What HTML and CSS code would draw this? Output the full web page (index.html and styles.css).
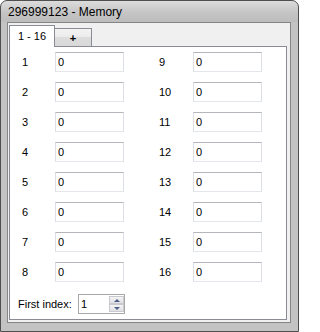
FILE: index.html
```html
<!DOCTYPE html>
<html>
<head>
<meta charset="utf-8">
<link rel="stylesheet" href="styles.css">
</head>
<body>
<div class="window">
  <div class="titlebar">296999123 - Memory</div>
  <div class="client">
    <div class="tabs">
      <div class="tabstrip">
        <div class="tab active">1 - 16</div>
        <div class="tab plus">+</div>
      </div>
      <div class="panel">
        <div class="grid">
          <div class="col col-left">
            <div class="row"><span class="label">1</span><div class="field">0</div></div>
            <div class="row"><span class="label">2</span><div class="field">0</div></div>
            <div class="row"><span class="label">3</span><div class="field">0</div></div>
            <div class="row"><span class="label">4</span><div class="field">0</div></div>
            <div class="row"><span class="label">5</span><div class="field">0</div></div>
            <div class="row"><span class="label">6</span><div class="field">0</div></div>
            <div class="row"><span class="label">7</span><div class="field">0</div></div>
            <div class="row"><span class="label">8</span><div class="field">0</div></div>
          </div>
          <div class="col col-right">
            <div class="row"><span class="label">9</span><div class="field">0</div></div>
            <div class="row"><span class="label">10</span><div class="field">0</div></div>
            <div class="row"><span class="label">11</span><div class="field">0</div></div>
            <div class="row"><span class="label">12</span><div class="field">0</div></div>
            <div class="row"><span class="label">13</span><div class="field">0</div></div>
            <div class="row"><span class="label">14</span><div class="field">0</div></div>
            <div class="row"><span class="label">15</span><div class="field">0</div></div>
            <div class="row"><span class="label">16</span><div class="field">0</div></div>
          </div>
        </div>
        <div class="first">
          <span class="first-label">First index:</span>
          <div class="spin">
            <span class="spin-val">1</span>
            <div class="spin-btns">
              <div class="spin-btn"><span class="arrow-up"></span></div>
              <div class="spin-btn"><span class="arrow-down"></span></div>
            </div>
          </div>
        </div>
      </div>
    </div>
  </div>
</div>
</body>
</html>
```

FILE: styles.css
```css
body {
  margin: 0;
  background: #fff;
}

.window {
  width: 299px;
  height: 332px;
  box-sizing: border-box;
  border: 1px solid #4f4f4f;
  border-radius: 7px 7px 0 0;
  background: linear-gradient(#dcdcdc 0px, #c4c4c4 12px, #bdbdbd 21px, #c3c3c3 21px);
  padding: 0 7px 8px 6px;
  display: flex;
  flex-direction: column;
  font-family: "Liberation Sans", Arial, sans-serif;
  color: #000;
}

.titlebar {
  height: 21px;
  font-size: 12px;
  line-height: 22px;
  padding-left: 1px;
}

.client {
  flex: 1;
  border: 1px solid #858585;
  background: #f0f0f0;
  padding: 2px 3px 2px 1px;
  display: flex;
  flex-direction: column;
}

.tabs {
  flex: 1;
  display: flex;
  flex-direction: column;
}

.tabstrip {
  display: flex;
  align-items: flex-end;
  height: 21px;
}

.tab {
  box-sizing: border-box;
  border: 1px solid #898c95;
  border-bottom: 0;
  font-size: 11px;
  text-align: center;
}

.tab.active {
  width: 46px;
  height: 22px;
  margin-bottom: -1px;
  background: #fff;
  line-height: 20px;
  position: relative;
  z-index: 1;
}

.tab.plus {
  width: 38px;
  height: 18px;
  margin-left: -1px;
  background: linear-gradient(#f3f3f3 0%, #ebebeb 50%, #dddddd 50%, #d9d9d9 100%);
  line-height: 19px;
  font-weight: bold;
}

.panel {
  flex: 1;
  border: 1px solid #898c95;
  background: #fff;
  padding-top: 5px;
}

.grid {
  display: flex;
}

.col {
  display: flex;
  flex-direction: column;
  gap: 10px;
}

.col-left {
  margin-left: 12px;
}

.col-right {
  margin-left: 35px;
}

.row {
  display: flex;
  align-items: center;
  height: 20px;
}

.label {
  width: 33px;
  font-size: 11px;
}

.col-right .label {
  width: 34px;
}

.field {
  width: 69px;
  height: 20px;
  box-sizing: border-box;
  border: 1px solid;
  border-color: #b4b6bc #dcdfe5 #e3e6eb #dcdfe5;
  font-size: 11px;
  line-height: 18px;
  padding-left: 2px;
}

.first {
  display: flex;
  align-items: center;
  margin: 12px 0 0 8px;
}

.first-label {
  width: 60px;
  font-size: 11px;
}

.spin {
  width: 47px;
  height: 20px;
  box-sizing: border-box;
  border: 1px solid #a8a8a8;
  display: flex;
  align-items: center;
  justify-content: space-between;
}

.spin-val {
  font-size: 11px;
  padding-left: 2px;
}

.spin-btns {
  display: flex;
  flex-direction: column;
  width: 15px;
  height: 16px;
}

.spin-btn {
  flex: 1;
  box-sizing: border-box;
  border: 1px solid #c9cacd;
  background: linear-gradient(#f5f5f5, #dfe0e3);
  display: flex;
  align-items: center;
  justify-content: center;
}

.arrow-up {
  width: 0;
  height: 0;
  border-left: 3px solid transparent;
  border-right: 3px solid transparent;
  border-bottom: 3px solid #4d5f84;
}

.arrow-down {
  width: 0;
  height: 0;
  border-left: 3px solid transparent;
  border-right: 3px solid transparent;
  border-top: 3px solid #4d5f84;
}
```
